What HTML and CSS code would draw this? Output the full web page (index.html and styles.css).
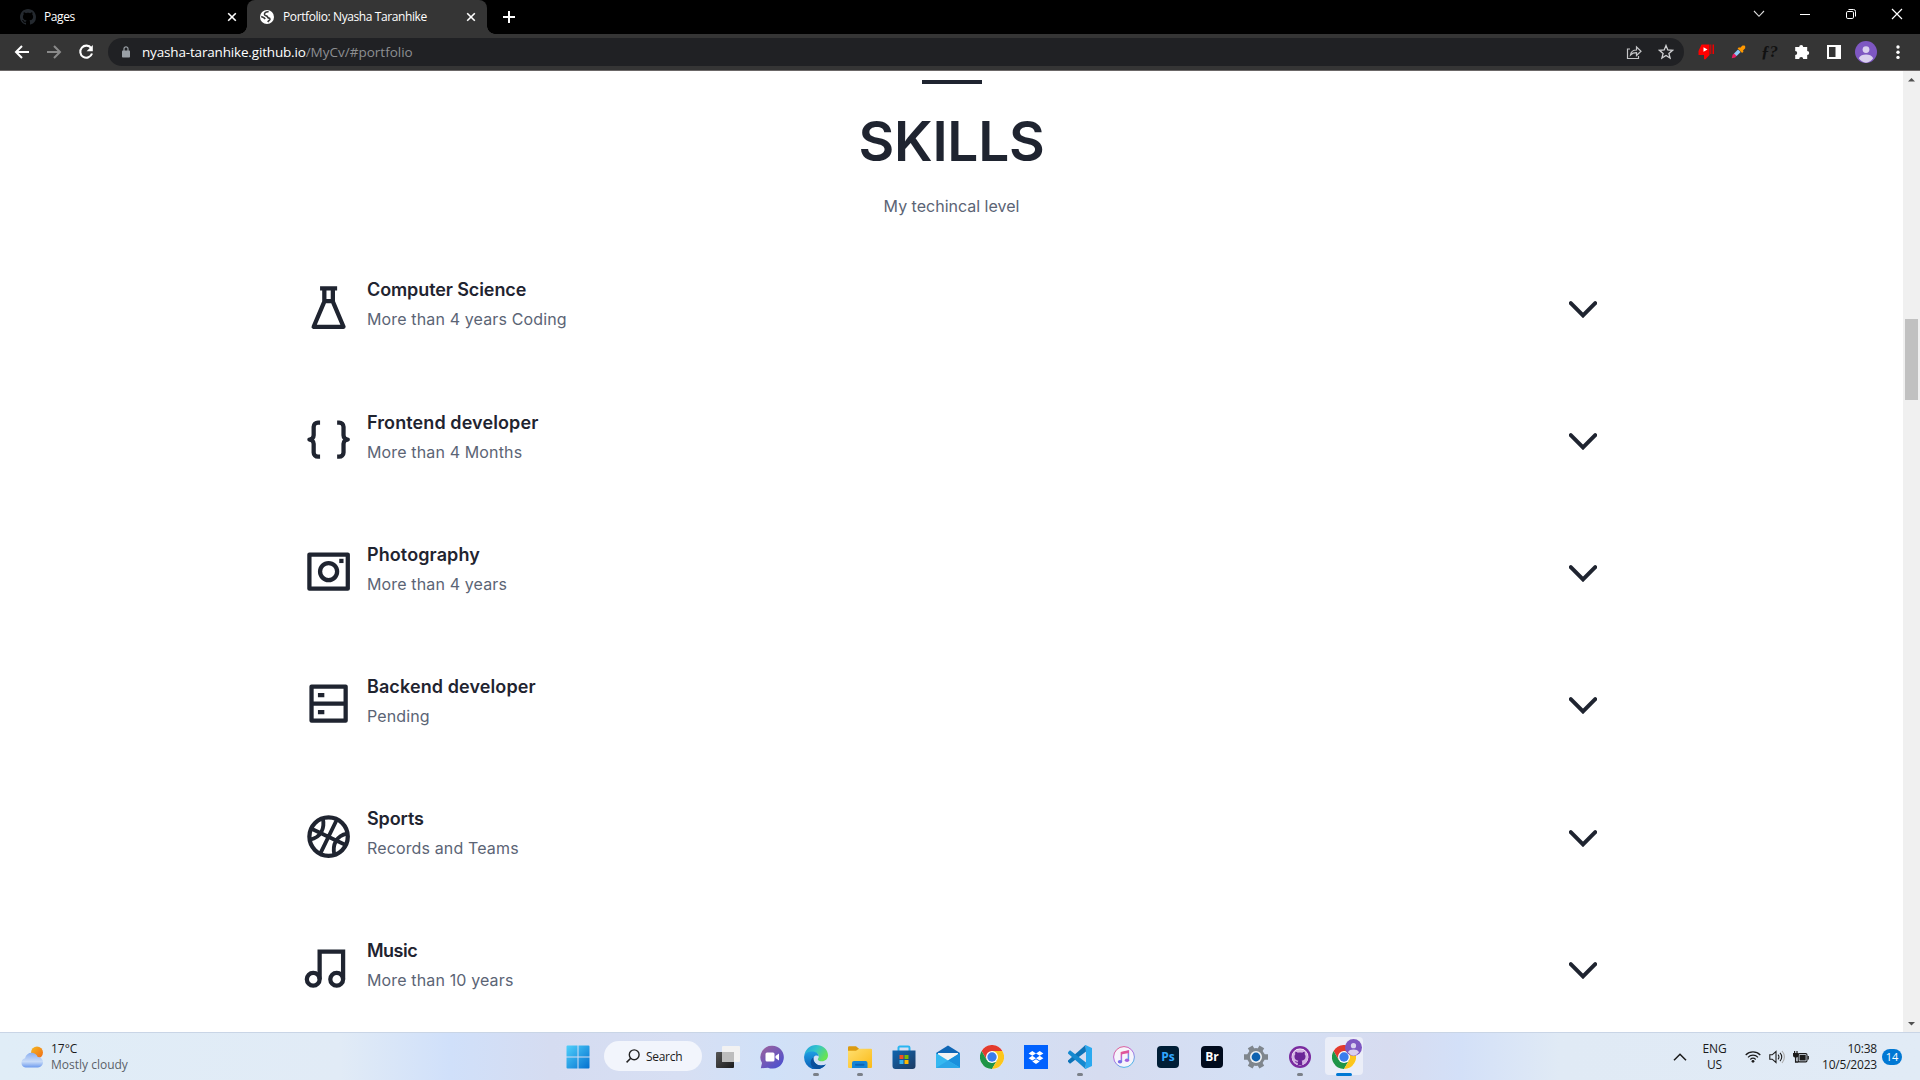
FILE: index.html
```html
<!DOCTYPE html>
<html lang="en">
<head>
<meta charset="utf-8">
<title>Portfolio: Nyasha Taranhike</title>
<link rel="stylesheet" href="styles.css">
</head>
<body>
<svg class="defs" aria-hidden="true">
  <symbol id="chevron" viewBox="0 0 28 17"><path d="M1.8 2.2 14 14.4 26.2 2.2" fill="none" stroke="currentColor" stroke-width="4" stroke-linecap="round"/></symbol>
  <symbol id="close" viewBox="0 0 10 10"><path d="m1.2 1.2 7.6 7.6m0-7.6L1.2 8.8" fill="none" stroke="#fff" stroke-width="1.6"/></symbol>
  <symbol id="octocat" viewBox="0 0 16 16"><path fill="currentColor" d="M8 0C3.58 0 0 3.58 0 8c0 3.54 2.29 6.53 5.47 7.59.4.07.55-.17.55-.38 0-.19-.01-.82-.01-1.49-2.01.37-2.53-.49-2.69-.94-.09-.23-.48-.94-.82-1.13-.28-.15-.68-.52-.01-.53.63-.01 1.08.58 1.23.82.72 1.21 1.87.87 2.33.66.07-.52.28-.87.51-1.07-1.78-.2-3.64-.89-3.64-3.95 0-.87.31-1.59.82-2.15-.08-.2-.36-1.02.08-2.12 0 0 .67-.21 2.2.82.64-.18 1.32-.27 2-.27s1.36.09 2 .27c1.53-1.04 2.2-.82 2.2-.82.44 1.1.16 1.92.08 2.12.51.56.82 1.27.82 2.15 0 3.07-1.87 3.75-3.65 3.95.29.25.54.73.54 1.48 0 1.07-.01 1.93-.01 2.2 0 .21.15.46.55.38A8.01 8.01 0 0 0 16 8c0-4.42-3.58-8-8-8z"/></symbol>
  <symbol id="chrome" viewBox="0 0 24 24">
    <circle cx="12" cy="12" r="12" fill="#fff"/>
    <path d="M12 6h10.4A12 12 0 0 0 1.6 6L6.8 15z" fill="#e33b2e"/>
    <path d="M6.8 15 1.6 6A12 12 0 0 0 12 24l5.2-9z" fill="#1f9547"/>
    <path d="M17.2 15 12 24A12 12 0 0 0 22.4 6H12z" fill="#fcc61c"/>
    <circle cx="12" cy="12" r="6" fill="#fff"/><circle cx="12" cy="12" r="4.7" fill="#3b7ded"/>
  </symbol>
  <symbol id="avatar" viewBox="0 0 22 22"><circle cx="11" cy="11" r="11" fill="#7e57c2"/><circle cx="11" cy="8.6" r="3.4" fill="#d9cfee"/><path d="M3.8 17.3C5 14.4 8 13.6 11 13.6s6 .8 7.2 3.7A11 11 0 0 1 11 21.8a11 11 0 0 1-7.2-4.5z" fill="#d9cfee"/></symbol>
</svg>

<header class="browser">
  <div class="tabs">
    <div class="tab">
      <svg class="favicon github" viewBox="0 0 16 16"><use href="#octocat"/></svg>
      <span class="tab-title">Pages</span>
      <svg class="tab-close" viewBox="0 0 10 10"><use href="#close"/></svg>
    </div>
    <div class="tab active">
      <svg class="favicon globe" viewBox="0 0 14 14"><circle cx="7" cy="7" r="7" fill="#fff"/><path d="M8.600 1.800C6 1.500 4.300 2.800 4.500 4.500 4.700 6 6 5.600 7 6.200c1 .6.200 1.500 1.300 1.700 1.200.2 1.800.3 1.700 1.300-.2 1.200-1.500 1.500-2.200 2.800M1.200 6.600C2.500 7 4.500 7.800 5.200 9" fill="none" stroke="#353535" stroke-width="1.600"/></svg>
      <span class="tab-title">Portfolio: Nyasha Taranhike</span>
      <svg class="tab-close" viewBox="0 0 10 10"><use href="#close"/></svg>
    </div>
    <svg class="new-tab" viewBox="0 0 12 12"><path d="M6 0v12M0 6h12" stroke="#fff" stroke-width="2"/></svg>
    <div class="window-controls">
      <svg viewBox="0 0 12 12"><path d="m1 3 5 5.300L11 3" fill="none" stroke="#ddd" stroke-width="1.100"/></svg>
      <svg viewBox="0 0 12 12"><path d="M1 6.500h10" stroke="#fff"/></svg>
      <svg viewBox="0 0 12 12"><g fill="none" stroke="#fff"><rect x="1.500" y="3.500" width="7" height="7" rx="1.300"/><path d="M3.500 1.500h5a2 2 0 0 1 2 2v5"/></g></svg>
      <svg viewBox="0 0 12 12"><path d="m1 1 10 10M11 1 1 11" stroke="#fff" stroke-width="1.200"/></svg>
    </div>
  </div>
  <div class="toolbar">
    <div class="nav">
      <svg viewBox="0 0 16 16"><path d="M15 8H2m6-6L2 8l6 6" fill="none" stroke="#fff" stroke-width="2"/></svg>
      <svg viewBox="0 0 16 16"><path d="M1 8h13M8 2l6 6-6 6" fill="none" stroke="#8a8a8a" stroke-width="2"/></svg>
      <svg viewBox="0 0 16 16"><path d="M13.200 4.200A6 6 0 1 0 14 9.500" fill="none" stroke="#fff" stroke-width="2.100"/><path d="M14.800 1v6.200H8.600z" fill="#fff"/></svg>
    </div>
    <div class="omnibox">
      <svg class="lock" viewBox="0 0 8 12"><rect y="4.500" width="8" height="7" rx=".8" fill="#9aa0a6"/><path d="M2 5V2.800a2 2 0 0 1 4 0V5" fill="none" stroke="#9aa0a6" stroke-width="1.200"/></svg>
      <div class="url"><span class="host">nyasha-taranhike.github.io</span><span class="path">/MyCv/#portfolio</span></div>
      <svg class="box-icon share" viewBox="0 0 16 16"><path d="M4 5H1.500v9.500h11V12M4.500 11c.5-3.500 2.500-5 6-5V3l4.500 4.300-4.500 4.200V8.700c-2.700 0-4.400.6-6 2.300z" fill="none" stroke="#c5c6c8" stroke-width="1.200"/></svg>
      <svg class="box-icon" viewBox="0 0 16 16"><path d="m8 1.500 1.800 4.400 4.800.4-3.700 3.100 1.200 4.600L8 11.500 3.900 14l1.200-4.600L1.400 6.300l4.800-.4z" fill="none" stroke="#d0d1d3" stroke-width="1.300"/></svg>
    </div>
    <div class="extensions">
      <svg viewBox="0 0 18 18"><path d="M4.500 1.500h8V12L8.500 16.200H7V12H1.500V8z" fill="#f00"/><path d="M13.300 1.500h1v9.500h-1zM15.500 1.500h1.500v9.500h-1.500z" fill="#e00"/><path d="m6.500 4.300 4 2.200-4 2.200z" fill="#fff"/></svg>
      <svg viewBox="0 0 18 18"><path d="m2.800 15.200.8-3.400 1.600-1.600 2.600 2.600-1.600 1.600z" fill="#e91e63"/><path d="m5 10.400 4-4 2.600 2.600-4 4z" fill="#90caf9"/><path d="m8.600 5.600 1.400-1.400 1.200.6 2.300-2.300h2l.7.7v2L14 7.400l.5 1.200-1.400 1.400z" fill="#ff9800"/></svg>
      <span class="font-ext">ƒ?</span>
      <svg viewBox="0 0 18 18"><path d="M6.200 4a2 2 0 1 1 4 0h4v4a2 2 0 1 1 0 4v4h-4a2 2 0 0 0-4 0h-4v-4a2 2 0 0 0 0-4V4z" fill="#fff"/></svg>
      <svg viewBox="0 0 18 18"><path d="M2 2h14v14H2zM4 4v10h6.500V4z" fill="#fff" fill-rule="evenodd"/></svg>
      <svg class="profile" viewBox="0 0 22 22"><use href="#avatar"/></svg>
      <svg viewBox="0 0 18 18"><g fill="#fff"><circle cx="9" cy="4" r="1.700"/><circle cx="9" cy="9.200" r="1.700"/><circle cx="9" cy="14.400" r="1.700"/></g></svg>
    </div>
  </div>
</header>

<div class="viewport">
  <main class="page">
    <div class="rule"></div>
    <h1>SKILLS</h1>
    <p class="subtitle">My techincal level</p>
    <section class="skills">
      <article class="skill">
        <svg class="skill-icon" viewBox="0 0 24 24"><path d="M10 3v6.200L5 21h14L14 9.200V3M8 3h8M10 9h4"/></svg>
        <div class="skill-text"><h2 class="tight">Computer Science</h2><p>More than 4 years Coding</p></div>
        <svg class="chevron"><use href="#chevron"/></svg>
      </article>
      <article class="skill">
        <svg class="skill-icon" viewBox="0 0 24 24"><path d="M8 4H7a2 2 0 0 0-2 2v4a2 2 0 0 1-2 2 2 2 0 0 1 2 2v4a2 2 0 0 0 2 2h1M16 4h1a2 2 0 0 1 2 2v4a2 2 0 0 0 2 2 2 2 0 0 0-2 2v4a2 2 0 0 1-2 2h-1"/></svg>
        <div class="skill-text"><h2>Frontend developer</h2><p>More than 4 Months</p></div>
        <svg class="chevron"><use href="#chevron"/></svg>
      </article>
      <article class="skill">
        <svg class="skill-icon" viewBox="0 0 24 24"><rect x="3" y="4" width="18" height="16"/><circle cx="12" cy="12" r="4"/><path class="solid" d="M17 6h2v2h-2z"/></svg>
        <div class="skill-text"><h2>Photography</h2><p>More than 4 years</p></div>
        <svg class="chevron"><use href="#chevron"/></svg>
      </article>
      <article class="skill">
        <svg class="skill-icon" viewBox="0 0 24 24"><path d="M4 4h16v16H4zM4 12h16"/><path class="solid" d="M7 7h3v2H7zM7 15h3v2H7z"/></svg>
        <div class="skill-text"><h2>Backend developer</h2><p>Pending</p></div>
        <svg class="chevron"><use href="#chevron"/></svg>
      </article>
      <article class="skill">
        <svg class="skill-icon" viewBox="0 0 24 24"><circle cx="12" cy="12" r="9"/><path stroke-width="1.800" d="M4 8.300 20 15.900M15.900 4 8.100 20M9.300 3.500C10.300 8 8.500 12.500 3.300 13.400M20.700 10.600C15.500 11.500 13.700 16 14.700 20.500"/></svg>
        <div class="skill-text"><h2 class="tight">Sports</h2><p>Records and Teams</p></div>
        <svg class="chevron"><use href="#chevron"/></svg>
      </article>
      <article class="skill">
        <svg class="skill-icon" viewBox="0 0 24 24"><circle cx="4.800" cy="17" r="3"/><circle cx="15.800" cy="17" r="3"/><path stroke-linejoin="miter" d="M7.800 17V4h11v13"/></svg>
        <div class="skill-text"><h2 class="tighter">Music</h2><p>More than 10 years</p></div>
        <svg class="chevron"><use href="#chevron"/></svg>
      </article>
    </section>
  </main>
  <div class="scrollbar">
    <svg viewBox="0 0 17 17"><path d="M5 10.500h7L8.500 7z" fill="#505050"/></svg>
    <div class="thumb"></div>
    <svg viewBox="0 0 17 17"><path d="M5 7h7l-3.500 3.500z" fill="#505050"/></svg>
  </div>
</div>

<footer class="taskbar">
  <div class="weather">
    <svg viewBox="0 0 24 24"><defs><linearGradient id="sun" x2="1" y2="1"><stop stop-color="#f5b921"/><stop offset="1" stop-color="#f06a16"/></linearGradient><linearGradient id="cloud" x2="0" y2="1"><stop stop-color="#8db0f0"/><stop offset=".6" stop-color="#c9dcf8"/><stop offset="1" stop-color="#6c9aee"/></linearGradient></defs><circle cx="17" cy="7.500" r="6" fill="url(#sun)"/><path d="M5.500 22.500a5 4.800 0 0 1-.5-9.300C6 9.500 9 7.500 12 7.800c3 .3 5 2 5.700 4.300A5.200 5.200 0 0 1 18 22.500z" fill="url(#cloud)"/></svg>
    <div class="weather-text"><span>17°C</span><span class="cond">Mostly cloudy</span></div>
  </div>
  <div class="apps">
    <div class="app"><svg viewBox="0 0 24 24"><defs><linearGradient id="win" x2="1" y2="1" gradientUnits="objectBoundingBox"><stop stop-color="#4fd0fb"/><stop offset="1" stop-color="#0470cf"/></linearGradient></defs><path fill="url(#win)" d="M.5 1.500a1 1 0 0 1 1-1H11.500v11H.5zM12.500.5h10a1 1 0 0 1 1 1v10h-11zM.5 12.500h11v11h-10a1 1 0 0 1-1-1zM12.500 12.500h11v10a1 1 0 0 1-1 1h-10z"/></svg></div>
    <div class="search"><svg viewBox="0 0 14 14"><circle cx="8.200" cy="5.800" r="4.900" fill="none" stroke="#222" stroke-width="1.400"/><path d="M4.700 9.300.6 13.400" stroke="#222" stroke-width="1.500"/></svg><span>Search</span></div>
    <div class="app"><svg viewBox="0 0 24 24"><defs><linearGradient id="dk" x2="1" y2="1"><stop stop-color="#555"/><stop offset="1" stop-color="#1c1c1c"/></linearGradient></defs><rect y="7" width="18" height="16" rx="1" fill="url(#dk)"/><rect x="6" y="1" width="18" height="16" rx="1" fill="#f2f2f2"/><path d="M6 7h12v10H6z" fill="#bdbdbd"/></svg></div>
    <div class="app"><svg viewBox="0 0 24 24"><defs><linearGradient id="chat" x2=".8" y2="1"><stop stop-color="#a0639b"/><stop offset="1" stop-color="#4b50d0"/></linearGradient></defs><path d="M12 .8a11.400 11.400 0 1 1-4 21.900L.8 23.300 2 18A11.400 11.400 0 0 1 12 .8z" fill="url(#chat)"/><rect x="5.500" y="7.500" width="9" height="9" rx="1.500" fill="#fff"/><path d="m15.500 11 3.500-2.500v7L15.500 13z" fill="#fff"/></svg></div>
    <div class="app running"><svg viewBox="0 0 24 24"><defs><linearGradient id="eg" x2="1" y2=".5"><stop stop-color="#1d9ddc"/><stop offset=".5" stop-color="#33c4cc"/><stop offset="1" stop-color="#67e355"/></linearGradient><linearGradient id="eb" x2="0" y2="1"><stop stop-color="#1e9de3"/><stop offset="1" stop-color="#0a5db5"/></linearGradient></defs><path d="M.2 11C1 4.500 6 0 12 0c7 0 12 4.600 12 10.200 0 3.800-2.800 6-6 6-2.700 0-4.200-1-4.200-1.800 0-.6 1-1 1-2.800 0-2-2-4-5-4C5 7.600.5 9 .2 11z" fill="url(#eg)"/><path d="M.1 12C.1 8.500 4 6.500 8.500 6.500c3.500 0 6.200 2.300 6.200 5-1-1.500-4-1.500-5 .7C8.300 15.500 12 20.500 17 20.500c2.500 0 4-.7 5-1.200A12 12 0 0 1 .1 12z" fill="url(#eb)"/><path d="M9.700 12.200C8.300 15.500 12 20.500 17 20.500c2.500 0 4-.7 5-1.200-2 3-5.800 4.700-9.500 4.700C5 22 5.500 14.500 9.700 12.200z" fill="#0b4f9c"/></svg></div>
    <div class="app running"><svg viewBox="0 0 24 24"><defs><linearGradient id="fold" x2="1" y2="1"><stop stop-color="#ffdf70"/><stop offset="1" stop-color="#fbba16"/></linearGradient></defs><path d="M0 2.500a1.200 1.200 0 0 1 1.200-1.200H8l3 2.500V7H0z" fill="#dc9b10"/><path d="M0 5.800h8L11 3.700h12a1 1 0 0 1 1 1V22a1 1 0 0 1-1 1H1a1 1 0 0 1-1-1z" fill="url(#fold)"/><path d="M4 23v-5a2 2 0 0 1 2-2h11.500a2 2 0 0 1 2 2v5z" fill="#1384d6"/><rect x="7" y="18.700" width="9.500" height="2" rx="1" fill="#0d63b4"/></svg></div>
    <div class="app"><svg viewBox="0 0 24 24"><defs><linearGradient id="st" x2="1" y2="1"><stop stop-color="#1065b0"/><stop offset="1" stop-color="#1d3b63"/></linearGradient></defs><path d="M6.500 6V2.800A1.300 1.300 0 0 1 7.800 1.500h8.400a1.300 1.300 0 0 1 1.300 1.300V6" fill="none" stroke="#29b5f2" stroke-width="2"/><path d="M.5 5.500h23V21a3 3 0 0 1-3 3h-17a3 3 0 0 1-3-3z" fill="url(#st)"/><path d="M7.500 10h4v4h-4z" fill="#f25022"/><path d="M12.500 10h4v4h-4z" fill="#7fba00"/><path d="M7.500 15h4v4h-4z" fill="#35b4f0"/><path d="M12.500 15h4v4h-4z" fill="#ffb900"/></svg></div>
    <div class="app"><svg viewBox="0 0 24 24"><path d="M0 8 12 .5 24 8v6H0z" fill="#1066b5"/><path d="M2 8h20v7H2z" fill="#f3f3f3"/><path d="m0 8 12 7.500L24 8v14.500a.5.500 0 0 1-.5.500H.5a.5.500 0 0 1-.5-.5z" fill="#35b8f1"/><path d="M12 15.500 24 8v14.500z" fill="#1a8fdc"/><path d="m0 23 12-7.500L24 23z" fill="#2ba6e8"/></svg></div>
    <div class="app"><svg viewBox="0 0 24 24"><use href="#chrome"/></svg></div>
    <div class="app"><svg viewBox="0 0 24 24"><path d="M0 0h24v24H0z" fill="#0061fe"/><g fill="#fff"><path d="m8.300 6 3.700 2.400-3.700 2.400-3.700-2.400zM15.700 6l3.700 2.400-3.700 2.400L12 8.400zM8.300 10.800l3.700 2.400-3.700 2.400-3.700-2.400zM15.700 10.800l3.700 2.400-3.700 2.400-3.700-2.400zM12 14.200l3.700 2.300L12 18.900l-3.700-2.400z"/></g></svg></div>
    <div class="app running"><svg viewBox="0 0 24 24"><path d="M17.500 0 0 15.500v1.300l2 2L18 6.500z" fill="#0d73b8"/><path d="M17.500 24 0 8.500V7.300l2-2L18 17.500z" fill="#1489d0"/><path d="M17.500 0 24 3v18l-6.500 3-1-1c1 .3 1.500-.3 1.500-1.300V2.300C18 1.300 17.500.7 16.500 1z" fill="#2aa9f0"/></svg></div>
    <div class="app"><svg viewBox="0 0 24 24"><defs><linearGradient id="it" x2=".5" y2="1"><stop stop-color="#f0576f"/><stop offset=".5" stop-color="#b765e0"/><stop offset="1" stop-color="#4bb5e8"/></linearGradient></defs><circle cx="12" cy="12" r="10.400" fill="#f6f4fb" stroke="url(#it)" stroke-width="1"/><path d="M9.400 16.500V7.500l7-1.500v9" fill="none" stroke="url(#it)" stroke-width="1.500"/><path d="M9 7.200 16.900 5.500V8L9 9.600z" fill="#e0559a"/><ellipse cx="8" cy="16.700" rx="2.200" ry="1.800" fill="#7b6be8"/><ellipse cx="15" cy="15.200" rx="2.200" ry="1.800" fill="#a262e0"/></svg></div>
    <div class="app"><span class="adobe ps">Ps</span></div>
    <div class="app"><span class="adobe br">Br</span></div>
    <div class="app"><svg viewBox="0 0 24 24"><circle cx="12" cy="12" r="9" fill="#7f868d"/><g stroke="#7f868d" stroke-width="5.500"><path d="M12 12h12M12 12H0M12 12l5.800 10.100M12 12 6.200 1.900M12 12l5.800-10.100M12 12 6.200 22.100"/></g><circle cx="12" cy="12" r="6" fill="#eef1f5"/><circle cx="12" cy="12" r="4.400" fill="#0f62b0"/></svg></div>
    <div class="app running"><svg viewBox="0 0 24 24"><circle cx="12" cy="12" r="11" fill="#7a2ba0"/><circle cx="12" cy="12" r="8.400" fill="#fff"/><svg class="octo-purple" x="3.300" y="3.600" width="17.400" height="17.400" viewBox="0 0 16 16"><circle cx="8" cy="8" r="7.500" fill="#d3b2e3"/><path fill="#6b2597" d="M6 15.300v-2.400c-1.800.3-2.300-.4-2.700-1.200.8-.2 1.500.6 2.700.5l.5-1C4.500 10.900 2.900 10 2.900 7.300c0-.9.300-1.600.8-2.200-.1-.3-.3-1.100.1-2.100.8 0 1.600.5 2.200.8 1.300-.3 2.700-.3 4 0 .6-.4 1.400-.8 2.200-.8.400 1 .2 1.800.1 2.100.5.600.8 1.300.8 2.200 0 2.700-1.600 3.600-3.600 3.900.4.400.5.900.5 1.500v2.600z"/></svg></svg></div>
    <div class="app running current"><svg viewBox="0 0 24 24"><use href="#chrome"/></svg><svg class="badge" viewBox="0 0 22 22"><use href="#avatar"/></svg></div>
  </div>
  <div class="tray">
    <svg class="tray-up" viewBox="0 0 14 8"><path d="M1 7.300 7 1.300l6 6" fill="none" stroke="#1b1b1b" stroke-width="1.500"/></svg>
    <div class="lang"><span>ENG</span><span>US</span></div>
    <svg class="wifi" viewBox="0 0 16 13"><g fill="none" stroke="#1b1b1b" stroke-width="1.200"><path d="M.7 5a10.300 10.300 0 0 1 14.600 0M3 7.300a7 7 0 0 1 10 0M5.300 9.500a3.900 3.900 0 0 1 5.400 0"/></g><circle cx="8" cy="11.300" r="1.400" fill="#1b1b1b"/></svg>
    <svg class="sound" viewBox="0 0 16 14"><g fill="none" stroke="#1b1b1b" stroke-width="1.100"><path d="M.8 4.800h2.400L7 1.500v11L3.200 9.200H.8zM9 4.700c1.300 1.300 1.300 3.300 0 4.600M11 2.800c2.300 2.400 2.300 6 0 8.400"/><path stroke="#aaa" d="M13 1c3.200 3.500 3.200 8.500 0 12"/></g></svg>
    <svg class="battery" viewBox="0 0 16 12"><rect x="5.200" y="2.600" width="8.800" height="8.300" rx="1.300" fill="none" stroke="#1b1b1b" stroke-width="1.100"/><path d="M6.500 4h6.200v5.500H6.500z" fill="#1b1b1b"/><path d="M15.200 5v3.500M2.600 6v5h3" fill="none" stroke="#1b1b1b" stroke-width="1.300"/><path d="M0 2h5.500v2.500a2 2 0 0 1-2 2h-1.500a2 2 0 0 1-2-2zM1 0h1.200v2H1zM3.400 0h1.200v2H3.400z" fill="#1b1b1b"/></svg>
    <div class="clock"><span>10:38</span><span class="date">10/5/2023</span></div>
    <span class="notif">14</span>
  </div>
</footer>
</body>
</html>
```
FILE: styles.css
```css
* { box-sizing: border-box; }
body { margin: 0; width: 1920px; height: 1080px; overflow: hidden; display: flex; flex-direction: column; background: #fff; font-family: "Open Sans", sans-serif; }
svg { display: block; flex: none; }
.defs { position: absolute; width: 0; height: 0; }

/* browser chrome */
.browser { flex: none; height: 71px; background: #353535; border-bottom: 1px solid #6b6767; color: #fff; }
.tabs { height: 34px; background: #000; display: flex; align-items: center; }
.tab { display: flex; align-items: center; height: 34px; width: 247px; padding: 0 10px 0 20px; }
.tab-title { font-size: 12px; line-height: 16px; letter-spacing: -.4px; white-space: nowrap; margin-left: 8px; }
.tab.active { width: 240px; padding: 0 11px 0 13px; background: #353535; border-radius: 8px 8px 0 0; position: relative; }
.tab.active::before, .tab.active::after { content: ""; position: absolute; bottom: 0; width: 8px; height: 8px; }
.tab.active::before { left: -8px; background: radial-gradient(circle at 0 0, #000 7.5px, #353535 8px); }
.tab.active::after { right: -8px; background: radial-gradient(circle at 100% 0, #000 7.5px, #353535 8px); }
.favicon { width: 16px; height: 16px; }
.favicon.globe { width: 14px; height: 14px; margin-right: 1px; }
.github { color: #24292f; }
.tab-close { width: 10px; height: 10px; margin-left: auto; }
.new-tab { width: 12px; height: 12px; margin-left: 16px; }
.window-controls { margin: -6px 17px 0 auto; display: flex; gap: 34px; }
.window-controls svg { width: 12px; height: 12px; }
.toolbar { height: 36px; display: flex; align-items: center; }
.nav { width: 108px; padding-left: 14px; display: flex; gap: 16px; }
.nav svg { width: 16px; height: 16px; }
.omnibox { width: 1576px; height: 28px; border-radius: 14px; background: #202124; display: flex; align-items: center; padding: 0 10px 0 14px; }
.lock { width: 8px; height: 12px; }
.url { margin: 0 auto 0 12px; font-size: 13.5px; line-height: 20px; white-space: nowrap; }
.host { letter-spacing: -.17px; }
.path { color: #8d8f92; }
.box-icon { width: 16px; height: 16px; margin-left: 16px; }
.extensions { display: flex; align-items: center; gap: 14px; margin-left: 13px; }
.extensions svg { width: 18px; height: 18px; }
.extensions svg.profile { width: 22px; height: 22px; margin: 0 -2px; }
.font-ext { width: 18px; font: italic bold 17px/18px "Liberation Serif", serif; color: #111; white-space: nowrap; }

/* page */
.viewport { height: 961px; display: flex; }
.page { width: 1903px; padding-top: 9px; font-family: Inter, sans-serif; color: #1f2430; }
.rule { width: 60px; height: 4px; margin: 0 auto; background: #1f2430; }
h1 { margin: 23px 0 0; text-align: center; font-size: 55px; line-height: 68px; font-weight: 600; letter-spacing: -.3px; }
.subtitle { margin: 21px 0 0; text-align: center; font-size: 16px; line-height: 20px; color: #5b6475; }
.skills { width: 1290.600px; margin: 60px 0 0 303.400px; }
.skill { height: 132.150px; display: flex; align-items: flex-start; }
.skill-icon { width: 51.200px; height: 51.200px; margin-top: 6px; fill: none; stroke: #1f2430; stroke-width: 2; stroke-linejoin: round; }
.skill-icon .solid { fill: #1f2430; stroke: none; }
.skill-text { margin: 2.400px auto 0 12.400px; white-space: nowrap; }
.skill h2 { margin: 0; font-size: 18px; line-height: 24px; font-weight: 600; letter-spacing: .1px; }
.skill h2.tight { letter-spacing: -.1px; }
.skill h2.tighter { letter-spacing: -.5px; }
.skill p { margin: 5px 0 0; font-size: 16px; line-height: 24px; letter-spacing: .14px; color: #5b6475; }
.chevron { width: 28px; height: 17px; margin: 25px -3px 0 0; }
.scrollbar { width: 17px; background: #f0f0f0; display: flex; flex-direction: column; }
.scrollbar svg { width: 17px; height: 17px; }
.thumb { width: 13px; height: 81px; margin: 231px 2px auto; background: #c1c1c1; }

/* taskbar */
.taskbar { height: 48px; flex: none; display: flex; border-top: 1px solid #c9d5e6; color: #1b1b1b; background: linear-gradient(90deg, #e0edf7 0, #e1ebf6 340px, #d0e0fa 450px, #d5dcf1 550px, #d7dff3 680px, #d0e1f8 770px, #d7def1 900px, #d3dff4 1000px, #d6dcf0 1100px, #d4e0f5 1260px, #d7dcf0 1390px, #d3e0f8 1460px, #e0eaf5 1560px, #e1ebf6 100%); }
.weather { width: 556px; padding: 1px 0 0 20px; display: flex; align-items: center; gap: 7px; }
.weather svg { width: 24px; height: 24px; }
.weather-text { display: flex; flex-direction: column; font-size: 12px; line-height: 16px; }
.cond { color: #5a6168; }
.apps { display: flex; }
.app { width: 44px; height: 47px; display: flex; align-items: center; justify-content: center; position: relative; }
.app svg { width: 24px; height: 24px; }
.app svg.octo-purple { width: 17.400px; height: 17.400px; }
.app.running::after { content: ""; position: absolute; left: 19px; bottom: 4px; width: 6px; height: 3px; border-radius: 2px; background: #7b8088; }
.app.current::before { content: ""; position: absolute; left: 3px; top: 4px; width: 38px; height: 38px; border-radius: 4px; background: #ebeef8; }
.app.current svg { position: relative; }
.app.current svg.badge { position: absolute; left: 23px; top: 6px; width: 17px; height: 17px; }
.app.current::after { left: 14px; width: 16px; background: #0078d4; }
.search { width: 98px; height: 30px; margin: 8px 4px 0; border-radius: 15px; background: #f2f5fc; display: flex; align-items: center; padding-left: 22px; gap: 6px; font-size: 12px; letter-spacing: -.3px; }
.search svg { width: 14px; height: 14px; }
.adobe { width: 22px; height: 22px; border-radius: 4px; font: bold 12px/21px "Open Sans", sans-serif; text-align: center; }
.ps { background: #001e36; color: #31a8ff; }
.br { background: #000b1d; color: #fff; }
.tray { margin-left: auto; display: flex; align-items: center; font-size: 12px; line-height: 16px; padding-right: 18px; }
.tray-up { width: 14px; height: 8px; }
.lang, .clock { display: flex; flex-direction: column; }
.lang { width: 24px; align-items: center; margin: 0 18px 0 16px; letter-spacing: -.2px; }
.wifi { width: 16px; height: 13px; }
.sound { width: 16px; height: 14px; margin-left: 8px; }
.battery { width: 16px; height: 12px; margin-left: 8px; }
.clock { width: 68.500px; align-items: flex-end; letter-spacing: -.2px; }
.notif { width: 20px; height: 16px; border-radius: 8px; background: #0078d4; color: #fff; margin-left: 5px; text-align: center; font-size: 11px; line-height: 15px; }
```
